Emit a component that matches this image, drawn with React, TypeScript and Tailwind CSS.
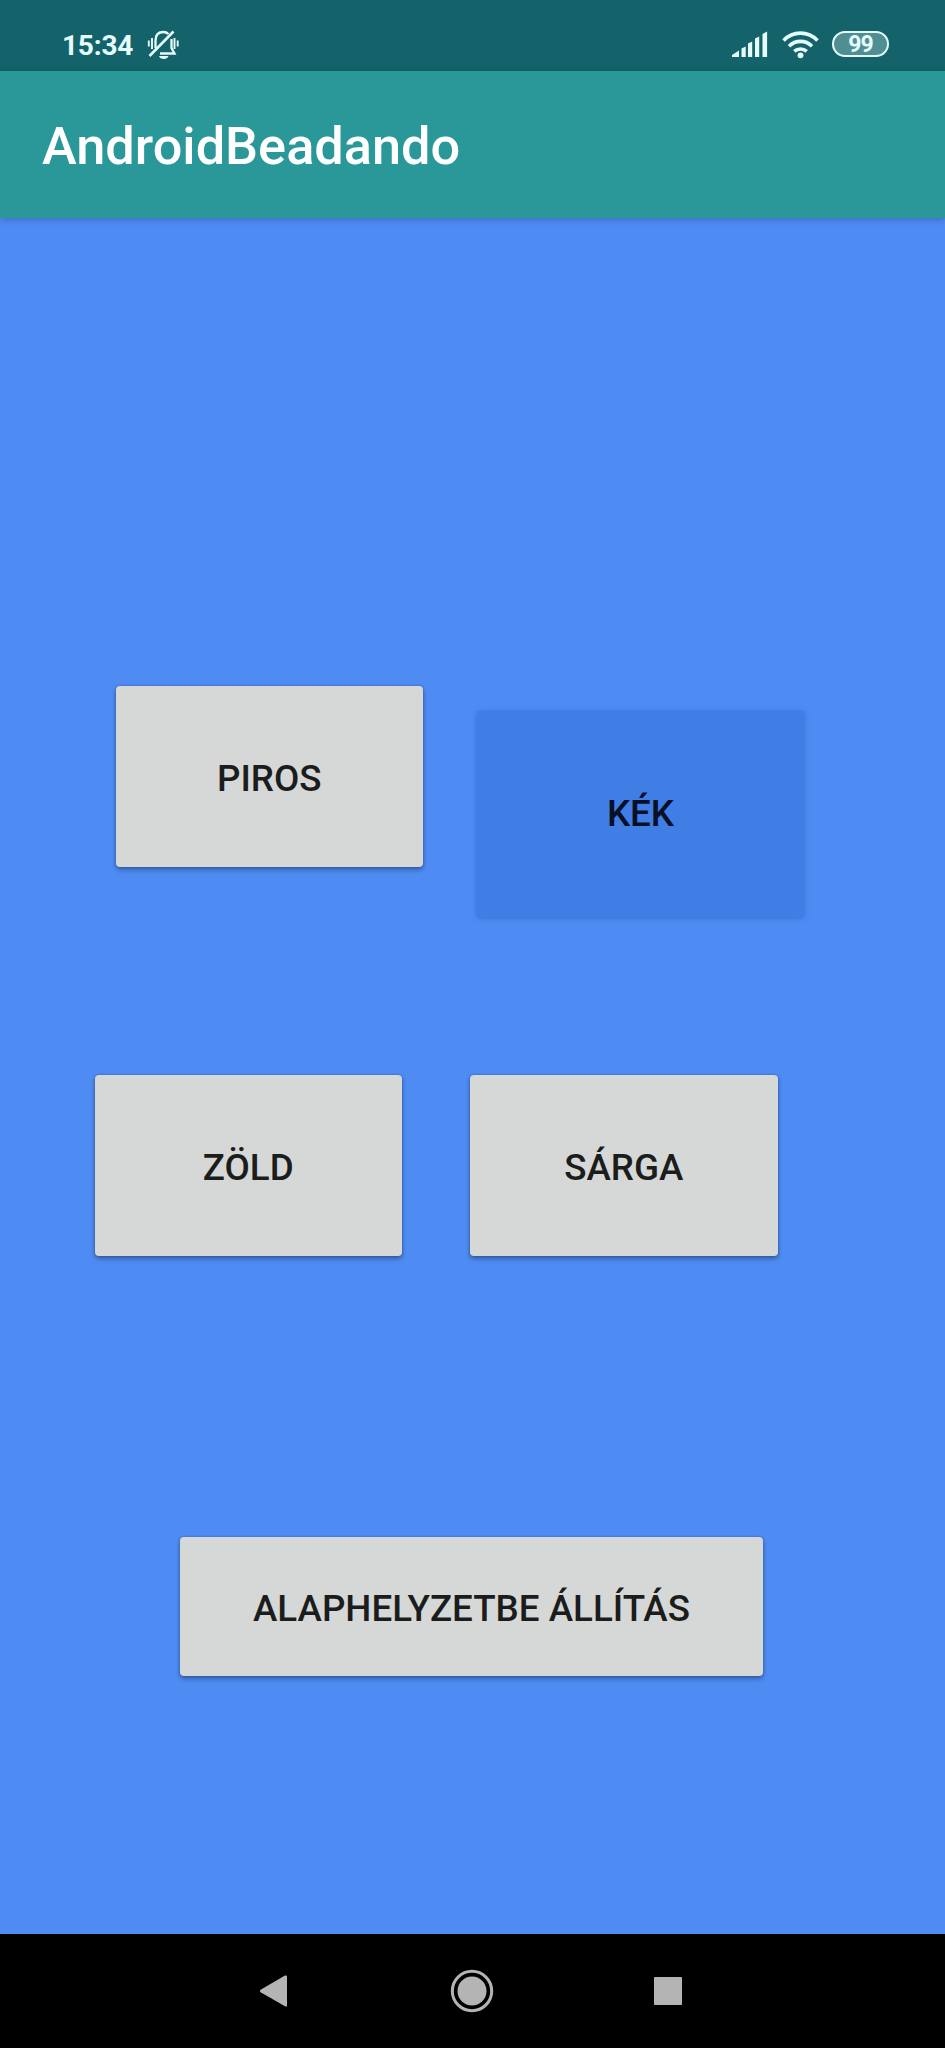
const raised =
  "flex h-[181px] w-[307.5px] items-center justify-center rounded-[4px] bg-[#d6d8d7] pt-[4px] text-[#1b1d1c] shadow-[0_3px_5px_rgba(0,0,0,0.3),0_0_3px_rgba(0,0,0,0.25)]";

function StatusBar() {
  return (
    <header className="flex h-[71px] shrink-0 items-start justify-between bg-[#14636a] pr-[56px] pl-[62px] text-[#e6fbfb]">
      <div className="flex items-start">
        <span className="mt-[29px] w-[72px] text-[28px] leading-[34px] font-bold tracking-[-0.2px] whitespace-nowrap">15:34</span>
        <svg className="mt-[28px] ml-[12px]" width="34" height="34" viewBox="0 0 34 34" fill="none" stroke="currentColor" strokeWidth="2.300">
          <path d="M9.500 20V12.500C9.500 7 12.500 4 17.500 4c2 0 3.500.6 5 2M25.500 11v9l3 5.500H14" />
          <path d="M3.500 28 27.500 3.500" strokeWidth="2.600" />
          <path d="M13 28h9.500c-1 4-8.500 4-9.500 0Z" fill="currentColor" stroke="none" />
          <path d="M6 10v11M2.800 12.500v6M28.500 10v11M31.700 12.500v6" strokeWidth="1.900" />
        </svg>
      </div>
      <div className="flex items-start">
        <svg className="mt-[30px]" width="38" height="28" viewBox="0 0 38 28" fill="currentColor">
          <path d="M1 25 8 20.500V27H1ZM10.500 18.500l4.200-2V27h-4.200ZM17 13.500l4.200-2V27H17ZM24 8.500l4.200-2V27H24ZM31.500 4l4.600-2.500V27h-4.600Z" />
        </svg>
        <svg className="mt-[30px] ml-[12px]" width="40" height="30" viewBox="0 0 40 30" fill="none" stroke="currentColor" strokeWidth="3.600">
          <path d="M2.500 10.500C12 .7 27 .7 36.500 10.500" />
          <path d="M8 16.200c6.500-6.400 16.500-6.400 23 0" />
          <path d="M13.300 21.400c3.500-3.300 8.900-3.300 12.400 0" />
          <circle cx="19.500" cy="25.300" r="2.900" fill="currentColor" stroke="none" />
        </svg>
        <div className="mt-[31px] ml-[11px] flex h-[26px] w-[57px] items-center justify-center rounded-full border-[2.5px] border-[#e6fbfb] bg-[#4f8f94] text-[23px] leading-none font-bold tracking-[-1px]">
          99
        </div>
      </div>
    </header>
  );
}

function NavigationBar() {
  return (
    <nav className="flex h-[114px] shrink-0 items-center bg-black pl-[258px] text-[#b4b4b4]">
      <svg width="32" height="34" viewBox="0 0 32 34" fill="currentColor">
        <path d="M29 2v30q-.5 1-2 .3L3 18.500q-2.200-1.500 0-3L27 1.600q1.500-.6 2 .4Z" />
      </svg>
      <svg className="ml-[160px]" width="44" height="44" viewBox="0 0 44 44">
        <circle cx="22" cy="22" r="19.700" fill="none" stroke="currentColor" strokeWidth="3" />
        <circle cx="22" cy="22" r="14.500" fill="currentColor" />
      </svg>
      <div className="ml-[160px] size-[28px] rounded-[1px] bg-[#b4b4b4]" />
    </nav>
  );
}

export default function App() {
  return (
    <div className="flex h-[2048px] w-[945px] flex-col overflow-hidden bg-[#4e8cf4] font-[Roboto,sans-serif]">
      <StatusBar />
      <div className="flex h-[147px] shrink-0 items-center bg-[#2a9799] pt-[3px] pl-[42px] text-[52.3px] font-medium text-white shadow-[0_2px_7px_rgba(0,0,0,0.22)]">
        AndroidBeadando
      </div>
      <main className="flex grow flex-col text-[36.75px] font-medium">
        <div className="mt-[468px] flex items-start pl-[115.5px]">
          <button className={raised}>PIROS</button>
          <button className="mt-[25px] ml-[54px] flex h-[206px] w-[327px] items-center justify-center bg-[#407de4] text-[#071027] shadow-[0_1px_5px_rgba(40,80,170,0.5)]">
            KÉK
          </button>
        </div>
        <div className="mt-[158px] flex gap-[68px] pl-[94.5px]">
          <button className={raised}>ZÖLD</button>
          <button className={raised}>SÁRGA</button>
        </div>
        <button className="mt-[281px] ml-[180px] flex h-[139px] w-[583px] items-center justify-center rounded-[4px] bg-[#d6d8d7] pt-[4px] text-[#1b1d1c] shadow-[0_3px_5px_rgba(0,0,0,0.3),0_0_3px_rgba(0,0,0,0.25)]">
          ALAPHELYZETBE ÁLLÍTÁS
        </button>
      </main>
      <NavigationBar />
    </div>
  );
}
